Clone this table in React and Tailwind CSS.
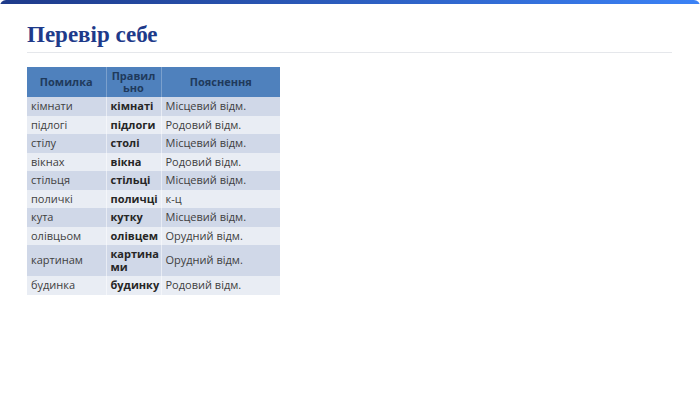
const ROWS = [
  ['кімнати', 'кімнаті', 'Місцевий відм.'],
  ['підлогі', 'підлоги', 'Родовий відм.'],
  ['стілу', 'столі', 'Місцевий відм.'],
  ['вікнах', 'вікна', 'Родовий відм.'],
  ['стільця', 'стільці', 'Місцевий відм.'],
  ['поличкі', 'поличці', 'к-ц'],
  ['кута', 'кутку', 'Місцевий відм.'],
  ['олівцьом', 'олівцем', 'Орудний відм.'],
  ['картинам', 'картинами', 'Орудний відм.'],
  ['будинка', 'будинку', 'Родовий відм.'],
]

export default function App() {
  return (
    <div className="w-[700px] h-[394px] bg-white overflow-hidden rounded-[6px] relative">
      <div className="h-[4px] bg-gradient-to-r from-[#1e3a8a] to-[#3b82f6]" />
      <div className="px-[27px] pt-[17px]">
        <h1 className="font-['Liberation_Serif',serif] font-bold text-[23px] leading-[28px] text-[#1e3a8a]">
          Перевір себе
        </h1>
        <div className="mt-[3px] h-px bg-[#e5e7eb] w-[645px]" />
        <table className="mt-[14px] border-collapse table-fixed w-[253px] font-['Open_Sans',sans-serif] text-[11px]">
          <colgroup>
            <col className="w-[79px]" />
            <col className="w-[55px]" />
            <col className="w-[119px]" />
          </colgroup>
          <thead>
            <tr className="bg-[#4f81bd] h-[30px] text-[#1f3a5c] font-bold">
              <th className="px-[4px] leading-[12px] text-center">Помилка</th>
              <th className="px-[3px] leading-[12px] text-center break-all border-l border-[#ffffff40]">Правильно</th>
              <th className="px-[4px] leading-[12px] text-center border-l border-[#ffffff40]">Пояснення</th>
            </tr>
          </thead>
          <tbody>
            {ROWS.map((r, i) => (
              <tr key={i} className={i % 2 === 0 ? 'bg-[#d0d8e8]' : 'bg-[#e9edf4]'}>
                <td className="px-[4px] py-[3px] leading-[12.5px] text-[#404040]">{r[0]}</td>
                <td className="pl-[4px] pr-[1px] py-[3px] leading-[12.5px] font-bold text-[#262626] break-all border-l border-[#ffffff80]">{r[1]}</td>
                <td className="px-[4px] py-[3px] leading-[12.5px] text-[#404040] border-l border-[#ffffff80]">{r[2]}</td>
              </tr>
            ))}
          </tbody>
        </table>
      </div>
    </div>
  )
}
